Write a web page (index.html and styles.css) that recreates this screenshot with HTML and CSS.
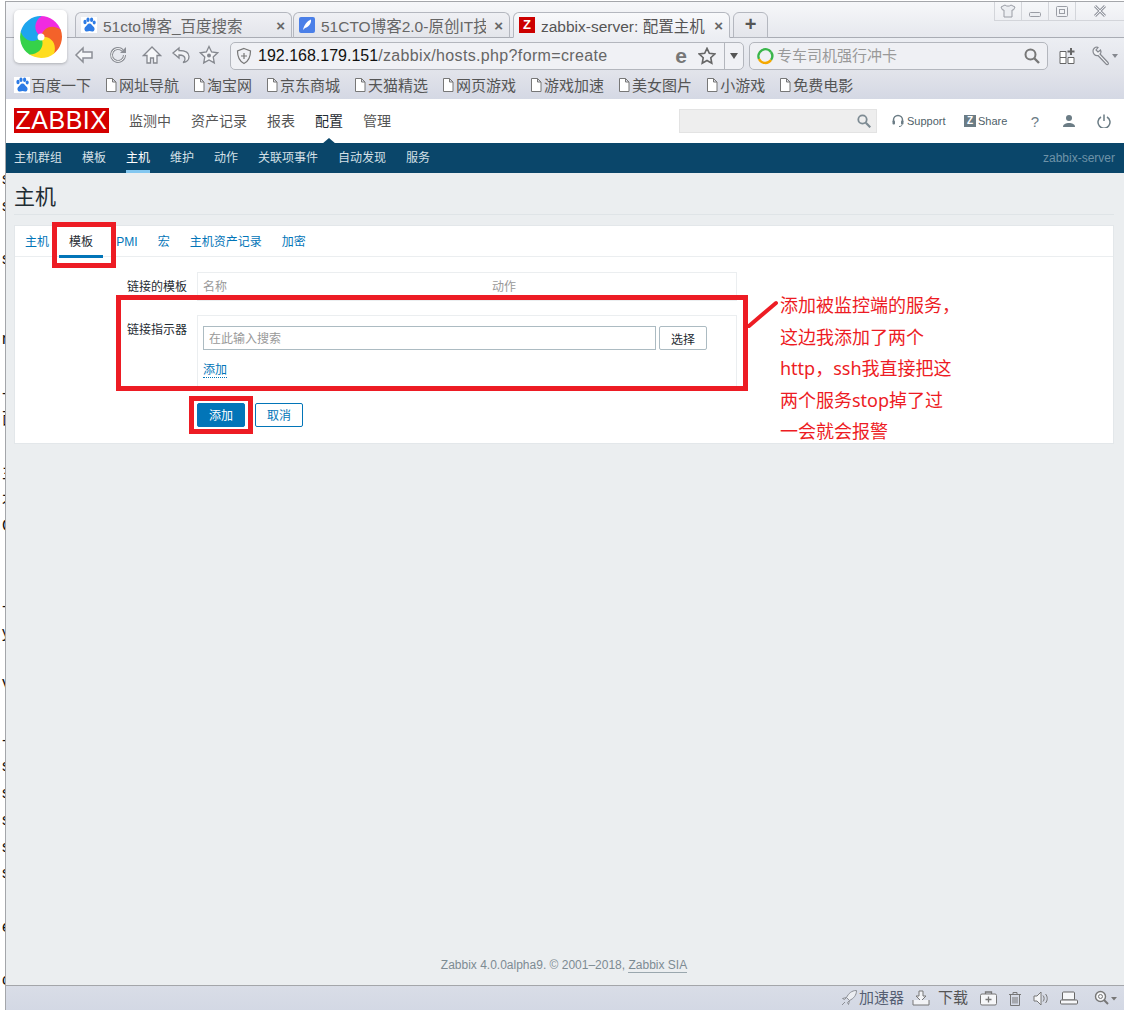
FILE: index.html
```html
<!doctype html>
<html lang="zh-CN">

<head>
    <title>zabbix-server: 配置主机</title>
    <link rel="stylesheet" href="styles.css">
</head>

<body>
    <!-- shared icons -->
    <svg class="defs" width="0" height="0">
        <symbol id="paw" viewBox="0 0 16 16">
            <rect width="16" height="16" fill="#fff" />
            <ellipse cx="4" cy="5" rx="1.6" ry="2.2" fill="#2d7be5" />
            <ellipse cx="7" cy="2.8" rx="1.6" ry="2.2" fill="#2d7be5" />
            <ellipse cx="10.6" cy="2.8" rx="1.6" ry="2.2" fill="#2d7be5" />
            <ellipse cx="13.2" cy="5.6" rx="1.5" ry="2" fill="#2d7be5" />
            <path d="M8.5 6.5c-2 0-2.6 2.2-4 3.2-1.600 1.100-1.500 4.800 1.500 4.800 1 0 1.700-.4 2.600-.4s1.600.4 2.500.4c3 0 3-3.700 1.400-4.800-1.400-1-2-3.200-4-3.200z" fill="#2d7be5" />
        </symbol>
        <symbol id="doc" viewBox="0 0 12 14">
            <path d="M1.500.5h6l3.500 3.500v9.500h-9.500z M7.500.5v3.500h3.500" fill="#fff" stroke="#777" />
        </symbol>
    </svg>

    <aside class="behind">s
s

s


n

-
面

主
木
C


-
y

V

-
s
s
s
s
s

e

c</aside>

    <div class="window">
        <div class="tabstrip">
            <div class="tab">
                <svg class="fav" width="16" height="16"><use href="#paw" /></svg>
                <span class="tab-title">51cto博客_百度搜索</span>
                <span class="tab-x">×</span>
            </div>
            <div class="tab">
                <svg class="fav" width="16" height="16" viewBox="0 0 16 16">
                    <rect width="16" height="16" rx="2" fill="#4a7fe8" />
                    <path d="M4 13C5 8 8 4 12 2.500 12.500 6 10 10 6 11z" fill="#fff" />
                </svg>
                <span class="tab-title">51CTO博客2.0-原创IT技</span>
                <span class="tab-x">×</span>
            </div>
            <div class="tab tab-active">
                <span class="fav-z">Z</span>
                <span class="tab-title">zabbix-server: 配置主机</span>
                <span class="tab-x">×</span>
            </div>
            <div class="tab-new">+</div>
            <div class="winctl">
                <span class="winbtn">
                    <svg width="16" height="14" viewBox="0 0 16 14">
                        <path d="M5 1 1 3l1.500 3H4v7h8V6h1.500L15 3l-4-2c-1 1.500-5 1.500-6 0z" fill="#eceef2" stroke="#9a9da5" />
                    </svg>
                </span>
                <span class="winbtn">
                    <svg width="14" height="14" viewBox="0 0 14 14"><rect x="1.500" y="8.500" width="11" height="4" rx="1" fill="#eceef2" stroke="#9a9da5" /></svg>
                </span>
                <span class="winbtn">
                    <svg width="14" height="14" viewBox="0 0 14 14">
                        <rect x="1.500" y="2.500" width="11" height="10" rx="1" fill="none" stroke="#9a9da5" />
                        <rect x="4.500" y="5.500" width="5" height="4" fill="none" stroke="#9a9da5" />
                    </svg>
                </span>
                <span class="winbtn winbtn-close">
                    <svg width="14" height="14" viewBox="0 0 14 14"><path d="M2 2l10 10M12 2 2 12" stroke="#9a9da5" stroke-width="3" /><path d="M2 2l10 10M12 2 2 12" stroke="#eceef2" /></svg>
                </span>
            </div>
        </div>

        <div class="toolbar">
            <div class="navicons">
                <svg width="20" height="20" viewBox="0 0 20 20"><path d="M9 3 2 10l7 7v-4h9V7H9z" fill="#f6f7f9" stroke="#8c8f96" stroke-width="1.500" /></svg>
                <svg width="20" height="20" viewBox="0 0 20 20"><path d="M16.500 10a6.500 6.500 0 1 1-2-4.700" fill="none" stroke="#8c8f96" stroke-width="3" /><path d="M16.500 10a6.500 6.500 0 1 1-2-4.700" fill="none" stroke="#f6f7f9" /><path d="M18 2v6h-6z" fill="#8c8f96" /></svg>
                <svg width="20" height="20" viewBox="0 0 20 20"><path d="M10 2 1.500 10.500H5V18h3.500v-5h3v5H15v-7.500h3.500z" fill="#f6f7f9" stroke="#85888f" stroke-width="1.300" /></svg>
                <svg class="nav-undo" width="20" height="20" viewBox="0 0 20 20"><path d="M8 3 2 8l6 5v-3c4 0 6 1.500 6 4 0 1.500-1 3-2 3.500 4-.5 6-3 6-6 0-4-4-6-10-6z" fill="#f2f3f6" stroke="#85888f" stroke-width="1.300" /></svg>
                <svg class="nav-star" width="20" height="20" viewBox="0 0 20 20"><path d="m10 1.500 2.600 5.500 6 .8-4.400 4.100 1.100 6L10 15l-5.300 2.900 1.100-6L1.400 7.800l6-.8z" fill="#f2f3f6" stroke="#85888f" stroke-width="1.300" /><circle cx="10" cy="10.500" r="2" fill="#85888f" /></svg>
            </div>
            <div class="addressbar">
                <svg class="shield" width="16" height="18" viewBox="0 0 16 18"><path d="M8 1.500 14.500 4c0 6-1.500 10-6.500 12.500C3 14 1.500 10 1.500 4z" fill="none" stroke="#777" stroke-width="1.200" /><path d="M8 6v6M5 9h6" stroke="#777" stroke-width="1.200" /></svg>
                <span class="url"><b>192.168.179.151</b>/zabbix/hosts.php?form=create</span>
                <span class="ie-e">e</span>
                <svg class="addr-star" width="18" height="18" viewBox="0 0 20 20"><path d="m10 1.500 2.600 5.500 6 .8-4.400 4.100 1.100 6L10 15l-5.300 2.900 1.100-6L1.400 7.800l6-.8z" fill="none" stroke="#666" stroke-width="1.800" /></svg>
                <span class="addr-drop"></span>
            </div>
            <div class="searchbar">
                <svg width="18" height="18" viewBox="0 0 18 18">
                    <path d="M3 12a7 7 0 0 1 12-7" fill="none" stroke="#39b54a" stroke-width="2.400" />
                    <path d="M15 5a7 7 0 0 1 0 8" fill="none" stroke="#39b54a" stroke-width="2.400" />
                    <path d="M15 13a7 7 0 0 1-12-1" fill="none" stroke="#f5a800" stroke-width="2.400" />
                </svg>
                <span class="search-hint">专车司机强行冲卡</span>
                <svg width="16" height="16" viewBox="0 0 16 16"><circle cx="6.500" cy="6.500" r="5" fill="none" stroke="#777" stroke-width="2" /><path d="m10 10 5 5" stroke="#777" stroke-width="2.400" /></svg>
            </div>
            <svg class="tool-apps" width="16" height="18" viewBox="0 0 16 18">
                <path d="M1 4.500h6v6H1zM1 10.500h6v6H1zM9 10.500h6v6H9z" fill="#fff" stroke="#666" />
                <path d="M12 1v7M8.500 4.500h7" stroke="#666" stroke-width="2" />
            </svg>
            <svg class="tool-wrench" width="28" height="20" viewBox="0 0 28 20">
                <path d="M1 5c0-2 2-4 4-4l1 .5L4 4l2 2 2.500-2 .5 1.500c0 1-.3 2-1 2.500l8 8.500c1 1 0 2.500-1.500 2L6 9.500C3 10 1 8 1 5z" fill="#f2f3f6" stroke="#85888f" stroke-width="1.200" />
                <path d="m20 8 6 0-3 4z" fill="#85888f" />
            </svg>
        </div>

        <div class="bookmarks">
            <a class="mark"><svg width="16" height="16"><use href="#paw" /></svg>百度一下</a>
            <a class="mark"><svg width="12" height="14"><use href="#doc" /></svg>网址导航</a>
            <a class="mark"><svg width="12" height="14"><use href="#doc" /></svg>淘宝网</a>
            <a class="mark"><svg width="12" height="14"><use href="#doc" /></svg>京东商城</a>
            <a class="mark"><svg width="12" height="14"><use href="#doc" /></svg>天猫精选</a>
            <a class="mark"><svg width="12" height="14"><use href="#doc" /></svg>网页游戏</a>
            <a class="mark"><svg width="12" height="14"><use href="#doc" /></svg>游戏加速</a>
            <a class="mark"><svg width="12" height="14"><use href="#doc" /></svg>美女图片</a>
            <a class="mark"><svg width="12" height="14"><use href="#doc" /></svg>小游戏</a>
            <a class="mark"><svg width="12" height="14"><use href="#doc" /></svg>免费电影</a>
        </div>

        <header class="topbar">
            <div class="logo">ZABBIX</div>
            <nav class="mainnav">
                <a>监测中</a>
                <a>资产记录</a>
                <a>报表</a>
                <a class="current">配置</a>
                <a>管理</a>
            </nav>
            <div class="usernav">
                <div class="topsearch">
                    <svg width="14" height="14" viewBox="0 0 14 14"><circle cx="5.500" cy="5.500" r="4.200" fill="none" stroke="#7d8b93" stroke-width="1.800" /><path d="m8.800 8.800 4.500 4.500" stroke="#7d8b93" stroke-width="2.200" /></svg>
                </div>
                <a class="ulink ulink-support">
                    <svg width="12" height="14" viewBox="0 0 12 14"><path d="M1.500 8V6a4.500 4.500 0 0 1 9 0v2" fill="none" stroke="#6b7c85" stroke-width="1.500" /><rect x=".5" y="6.500" width="2.500" height="4" rx="1" fill="#6b7c85" /><rect x="9" y="6.500" width="2.500" height="4" rx="1" fill="#6b7c85" /><path d="M10 10.500c0 1.500-1.500 2-3 2" fill="none" stroke="#6b7c85" /></svg>
                    Support
                </a>
                <a class="ulink ulink-share"><span class="zbox">Z</span>Share</a>
                <a class="uicon uicon-help">?</a>
                <svg class="uicon-user" width="14" height="14" viewBox="0 0 14 14"><circle cx="7" cy="4" r="3" fill="#6b7c85" /><path d="M1 13c0-3 3-4 6-4s6 1 6 4z" fill="#6b7c85" /></svg>
                <svg class="uicon-power" width="14" height="14" viewBox="0 0 14 14"><path d="M4 3a6 6 0 1 0 6 0" fill="none" stroke="#6b7c85" stroke-width="1.500" /><path d="M7 .5v6.500" stroke="#6b7c85" stroke-width="1.500" /></svg>
            </div>
        </header>

        <nav class="subnav">
            <a>主机群组</a>
            <a>模板</a>
            <a class="current">主机</a>
            <a>维护</a>
            <a>动作</a>
            <a>关联项事件</a>
            <a>自动发现</a>
            <a>服务</a>
            <span class="server">zabbix-server</span>
        </nav>

        <main class="content">
            <h1 class="page-title">主机</h1>
            <section class="card">
                <ul class="tabs">
                    <li>主机</li>
                    <li class="active">模板</li>
                    <li>IPMI</li>
                    <li>宏</li>
                    <li>主机资产记录</li>
                    <li>加密</li>
                </ul>
                <form class="hostform">
                    <label class="field-label">链接的模板</label>
                    <div class="box box-linked">
                        <span class="col-head col-name">名称</span>
                        <span class="col-head">动作</span>
                    </div>
                    <label class="field-label">链接指示器</label>
                    <div class="box box-link">
                        <div class="input-row">
                            <input type="text" class="search-input" placeholder="在此输入搜索">
                            <button type="button" class="btn-select">选择</button>
                        </div>
                        <a class="add-link">添加</a>
                    </div>
                    <div class="form-actions">
                        <button type="button" class="btn-add">添加</button>
                        <button type="button" class="btn-cancel">取消</button>
                    </div>
                </form>
            </section>
            <footer class="pagefoot">Zabbix 4.0.0alpha9. © 2001–2018, <a>Zabbix SIA</a></footer>
        </main>

        <div class="statusbar">
            <svg width="18" height="18" viewBox="0 0 18 18"><path d="M16.500 1.500c-5 0-8 3-10 7l3 3c4-2 7-5 7-10zM6.500 8.500l-4 1 2 1zM9.500 11.500l-1 4-1-2zM5 13l-3 3" fill="#eceef2" stroke="#8c8f96" /></svg>
            <span class="st-text">加速器</span>
            <svg class="st-dl" width="18" height="16" viewBox="0 0 18 16"><path d="M7 1h4v5h3l-5 5-5-5h3z" fill="#f2f3f6" stroke="#777" /><path d="M1 10v5h16v-5" fill="#f2f3f6" stroke="#777" /></svg>
            <span class="st-text st-text-dl">下载</span>
            <svg class="st-gap" width="17" height="15" viewBox="0 0 17 15"><rect x=".5" y="3" width="16" height="11" rx="1.500" fill="#f6f7f9" stroke="#777" /><path d="M5.500 3V1h6v2M8.500 5.500v6M5.500 8.500h6" fill="none" stroke="#777" stroke-width="1.300" /></svg>
            <svg class="st-gap" width="14" height="15" viewBox="0 0 14 15"><path d="M1 3.500h12M5 3.500V1.500h4v2M2.500 3.500v11h9v-11M5 6v6.500M7 6v6.500M9 6v6.500" fill="none" stroke="#777" /></svg>
            <svg class="st-gap" width="16" height="15" viewBox="0 0 16 15"><path d="M1 5h3l4-4v13l-4-4H1z" fill="#f6f7f9" stroke="#777" /><path d="M10 4.500c1.500 1.500 1.500 4.500 0 6M12.500 3c2.300 2.500 2.300 6.500 0 9" fill="none" stroke="#777" /></svg>
            <svg class="st-gap" width="18" height="14" viewBox="0 0 18 14"><rect x="2.500" y="1" width="12" height="8" rx="1" fill="#f6f7f9" stroke="#666" /><rect x=".5" y="9" width="17" height="4" rx="1" fill="#f6f7f9" stroke="#666" /></svg>
            <svg class="st-zoom" width="24" height="16" viewBox="0 0 24 16"><circle cx="6.500" cy="6.500" r="5" fill="#f6f7f9" stroke="#777" stroke-width="1.400" /><circle cx="6.500" cy="6.500" r="2" fill="none" stroke="#777" /><path d="m10 10 4 4" stroke="#777" stroke-width="2" /><path d="m17 7 6 0-3 3.500z" fill="#777" /></svg>
        </div>
    </div>

    <!-- browser logo sits over the tab strip -->
    <div class="app-logo">
        <svg width="44" height="44" viewBox="-22 -22 44 44">
            <circle r="20" fill="#ff9a1f" />
            <path d="M0 0C-8-4-10-14-1-21A21 21 0 0 1 20-6C12-12 3-9 0 0Z" fill="#f02be0" />
            <path d="M0 0C-8-4-10-14-1-21A21 21 0 0 1 20-6C12-12 3-9 0 0Z" fill="#f4622a" transform="rotate(72)" />
            <path d="M0 0C-8-4-10-14-1-21A21 21 0 0 1 20-6C12-12 3-9 0 0Z" fill="#ffdd1f" transform="rotate(144)" />
            <path d="M0 0C-8-4-10-14-1-21A21 21 0 0 1 20-6C12-12 3-9 0 0Z" fill="#35d24a" transform="rotate(216)" />
            <path d="M0 0C-8-4-10-14-1-21A21 21 0 0 1 20-6C12-12 3-9 0 0Z" fill="#1ea5ee" transform="rotate(288)" />
            <circle r="3.500" fill="#fff" />
        </svg>
    </div>

    <!-- hand drawn notes on top of the screenshot -->
    <div class="mark-box mark-tab"></div>
    <div class="mark-box mark-field"></div>
    <div class="mark-box mark-btn"></div>
    <svg class="mark-line" width="32" height="28" viewBox="0 0 32 28"><path d="M2 26 29 3" stroke="#ed1c24" stroke-width="4" stroke-linecap="round" /></svg>
    <div class="note">添加被监控端的服务，<br>这边我添加了两个<br>http，ssh我直接把这<br>两个服务stop掉了过<br>一会就会报警</div>
</body>

</html>
```

FILE: styles.css
```css
* {
    box-sizing: border-box;
}

html,
body {
    margin: 0;
    height: 1010px;
    overflow: hidden;
}

body {
    display: flex;
    position: relative;
    background-color: white;
    font-family: "Liberation Sans", "Noto Sans CJK SC", sans-serif;
    font-size: 12px;
}

.defs {
    position: absolute;
}

/* page behind the browser window */
.behind {
    width: 5px;
    flex: none;
    padding: 166px 0 0 2px;
    overflow: hidden;
    white-space: pre;
    font-size: 16px;
    line-height: 26.7px;
    color: #111;
}

.window {
    flex: 1;
    min-width: 0;
    margin-top: 1px;
    display: flex;
    flex-direction: column;
    border-left: 1px solid #a4a6aa;
    border-top: 1px solid #a4a6aa;
    background-color: #ebeef0;
}

/* tabs */
.tabstrip {
    height: 36px;
    flex: none;
    display: flex;
    align-items: flex-end;
    padding-left: 69px;
    gap: 1px;
    background: linear-gradient(#f6f7f9, #e6e8ee);
    border-bottom: 1px solid #a9acb4;
}

.tab {
    width: 217px;
    height: 26px;
    margin-bottom: -1px;
    display: flex;
    align-items: center;
    padding: 0 6px 0 5px;
    border: 1px solid #b4b7bf;
    border-bottom-color: #a9acb4;
    border-radius: 6px 6px 0 0;
    background: linear-gradient(#eff0f4, #e3e5eb);
    color: #666;
    font-size: 15.5px;
    white-space: nowrap;
}

.tab-active {
    margin-left: 2px;
    background: linear-gradient(#f8f9fb, #eceef3);
    border-bottom-color: #eceef3;
    color: #555;
}

.fav {
    flex: none;
}

.fav-z {
    width: 16px;
    height: 16px;
    flex: none;
    background-color: #cc0000;
    color: white;
    font-size: 13px;
    font-weight: bold;
    line-height: 16px;
    text-align: center;
}

.tab-title {
    flex: 1;
    min-width: 0;
    margin-left: 6px;
    overflow: hidden;
}

.tab-x {
    flex: none;
    margin-left: 8px;
    font-size: 15px;
    font-weight: bold;
    color: #666;
}

.tab-new {
    width: 35px;
    height: 26px;
    margin-left: 2px;
    margin-bottom: -1px;
    border: 1px solid #b4b7bf;
    border-radius: 6px 6px 0 0;
    background: linear-gradient(#eff0f4, #e3e5eb);
    color: #555;
    font-size: 20px;
    font-weight: bold;
    line-height: 23px;
    text-align: center;
}

.winctl {
    margin-left: auto;
    align-self: flex-start;
    display: flex;
    height: 19px;
}

.winbtn {
    width: 27px;
    display: flex;
    align-items: center;
    justify-content: center;
    border-left: 1px solid #d3d5da;
    border-bottom: 1px solid #d3d5da;
}

.winbtn-close {
    width: 49px;
}

/* address row */
.toolbar {
    height: 35px;
    flex: none;
    display: flex;
    align-items: center;
    background: linear-gradient(#eceef3, #e1e3ea);
}

.navicons {
    width: 224px;
    margin-top: -2px;
    padding-left: 68px;
    display: flex;
    gap: 14px;
}

.nav-undo {
    margin-left: -5px;
}

.nav-star {
    margin-left: -6px;
}

.addressbar {
    width: 514px;
    height: 28px;
    display: flex;
    align-items: center;
    padding-left: 5px;
    border: 1px solid #b3b6bd;
    border-radius: 5px;
    background-color: #f0f1f5;
}

.shield {
    flex: none;
}

.url {
    margin-left: 6px;
    font-size: 16px;
    letter-spacing: .35px;
    color: #666;
    white-space: nowrap;
}

.url b {
    font-weight: normal;
    letter-spacing: 0;
    color: #111;
}

.ie-e {
    margin-left: auto;
    font-size: 21px;
    line-height: 20px;
    font-weight: bold;
    color: #777;
}

.addr-star {
    margin-left: 11px;
}

.addr-drop {
    width: 19px;
    height: 100%;
    margin-left: 8px;
    position: relative;
    border-left: 1px solid #b3b6bd;
}

.addr-drop::after {
    content: "";
    position: absolute;
    left: 5px;
    top: 10px;
    border: 4.500px solid transparent;
    border-top: 6px solid #555;
}

.searchbar {
    width: 299px;
    height: 28px;
    margin-left: 5px;
    display: flex;
    align-items: center;
    padding: 0 7px 0 6px;
    border: 1px solid #b3b6bd;
    border-radius: 5px;
    background-color: #eff0f4;
}

.search-hint {
    flex: 1;
    margin: -3px 0 0 3px;
    font-size: 15px;
    color: #999;
}

.tool-apps {
    margin-left: 11px;
}

.tool-wrench {
    margin-left: 17px;
}

/* bookmarks */
.bookmarks {
    height: 26px;
    flex: none;
    display: flex;
    align-items: center;
    gap: 14px;
    padding: 0 0 3px 8px;
    background: linear-gradient(#e1e3ea, #d4d8e4);
    font-size: 15px;
    color: #555;
}

.mark {
    display: flex;
    align-items: center;
    gap: 2px;
    white-space: nowrap;
}

.mark:first-child {
    gap: 1px;
}

/* zabbix header */
.topbar {
    height: 44px;
    flex: none;
    display: flex;
    align-items: center;
    padding-left: 8px;
    background-color: white;
}

.logo {
    width: 95px;
    height: 25px;
    margin-top: -1px;
    background-color: #d40000;
    color: white;
    font-size: 25px;
    line-height: 25px;
    letter-spacing: .5px;
    text-align: center;
}

.mainnav {
    margin-left: 20px;
    padding-bottom: 2px;
    display: flex;
    gap: 20px;
    font-size: 14px;
    color: #555;
}

.mainnav .current {
    position: relative;
    color: #1f2c33;
}

.mainnav .current::after {
    content: "";
    position: absolute;
    left: 7px;
    top: 28px;
    border: 7px solid transparent;
    border-top: 0;
    border-bottom: 6px solid #0a466a;
}

.usernav {
    margin-left: auto;
    display: flex;
    align-items: center;
    padding-right: 13px;
    color: #4f5f69;
}

.topsearch {
    width: 198px;
    height: 24px;
    margin-right: 15px;
    display: flex;
    align-items: center;
    justify-content: flex-end;
    padding-right: 5px;
    background-color: #eeeeee;
    border: 1px solid #e3e3e3;
}

.ulink {
    display: flex;
    align-items: center;
    font-size: 11px;
    color: #4f5f69;
}

.ulink svg {
    margin-right: 3px;
}

.ulink-support {
    width: 72px;
}

.ulink-share {
    width: 61px;
}

.zbox {
    width: 12px;
    height: 12px;
    margin-right: 2px;
    background-color: #6b7c85;
    color: white;
    font-size: 10px;
    font-weight: bold;
    line-height: 12px;
    text-align: center;
}

.uicon-help {
    width: 20px;
    margin-right: 17px;
    font-size: 15px;
    color: #6b7c85;
    text-align: center;
}

.uicon-power {
    margin-left: 21px;
}

.subnav {
    height: 30px;
    flex: none;
    display: flex;
    align-items: center;
    gap: 20px;
    padding: 0 9px 0 8px;
    background-color: #0a466a;
    color: #d5e0e7;
}

.subnav a {
    height: 30px;
    line-height: 30px;
}

.subnav .current {
    color: white;
    border-bottom: 3px solid #83c7f0;
}

.server {
    margin-left: auto;
    color: #6e93a8;
}

/* page */
.content {
    flex: 1;
    display: flex;
    flex-direction: column;
    padding: 0 10px 0 8px;
    min-height: 0;
}

.page-title {
    height: 42px;
    margin: 0 0 10px;
    padding-top: 10px;
    border-bottom: 1px solid #dfe4e7;
    font-size: 21px;
    font-weight: normal;
    line-height: 28px;
    color: #1f2c33;
}

.card {
    background-color: white;
    border: 1px solid #e3e7ea;
}

.tabs {
    height: 31px;
    margin: 0;
    padding: 0;
    display: flex;
    list-style: none;
    border-bottom: 1px solid #ebeef0;
    color: #0275b8;
    line-height: 33px;
}

.tabs li {
    padding: 0 10px;
}

.tabs .active {
    height: 32px;
    border-bottom: 3px solid #0275b8;
    color: #1f2c33;
}

.hostform {
    display: grid;
    grid-template-columns: 172px 540px;
    column-gap: 10px;
    row-gap: 14px;
    padding: 15px 0 16px;
}

.field-label {
    padding-top: 5px;
    text-align: right;
    color: #1f2c33;
}

.box {
    border: 1px solid #ebeef0;
}

.box-linked {
    height: 29px;
    display: flex;
    padding: 4px 5px;
    color: #999;
}

.col-name {
    width: 289px;
}

.box-link {
    height: 72px;
    padding: 10px 5px;
}

.input-row {
    display: flex;
    gap: 3px;
    margin-bottom: 10px;
}

.search-input {
    width: 453px;
    height: 24px;
    padding: 1px 5px 0;
    border: 1px solid #acbbc2;
    font: inherit;
    color: #1f2c33;
}

.search-input::placeholder {
    color: #999;
    opacity: 1;
}

.btn-select {
    width: 48px;
    height: 24px;
    padding: 0;
    background-color: white;
    border: 1px solid #acbbc2;
    border-radius: 2px;
    font: inherit;
    color: #1f2c33;
}

.add-link {
    color: #0275b8;
    border-bottom: 1px dotted #0275b8;
}

.form-actions {
    grid-column: 2;
    display: flex;
    gap: 10px;
    margin-top: 2px;
}

.form-actions button {
    width: 48px;
    height: 24px;
    padding: 0 0 2px;
    border: 1px solid #0275b8;
    border-radius: 2px;
    font: inherit;
}

.btn-add {
    background-color: #0275b8;
    color: white;
}

.btn-cancel {
    background-color: white;
    color: #0275b8;
}

.pagefoot {
    margin-top: auto;
    padding: 0 0 12px;
    text-align: center;
    color: #7d8b93;
    line-height: 16px;
}

.pagefoot a {
    border-bottom: 1px solid #9aa7ae;
}

.statusbar {
    height: 25px;
    flex: none;
    display: flex;
    align-items: center;
    justify-content: flex-end;
    padding-right: 6px;
    background: linear-gradient(#d9dde7, #d3d8e4);
    border-top: 1px solid #a4a6aa;
}

.st-text {
    margin: -3px 0 0 1px;
    font-size: 15px;
    color: #555f73;
}

.st-text-dl {
    margin-left: 8px;
    margin-right: 1px;
    color: #555;
}

.st-dl {
    margin-left: 8px;
}

.st-gap {
    margin-left: 11px;
}

.st-zoom {
    margin-left: 16px;
}

/* things lying over the page */
.app-logo {
    position: absolute;
    left: 14px;
    top: 10px;
    width: 53px;
    height: 53px;
    display: flex;
    align-items: center;
    justify-content: center;
    background-color: white;
    border-radius: 5px;
    box-shadow: 0 1px 3px rgba(0, 0, 0, 0.25);
}

.mark-box {
    position: absolute;
    border: 5px solid #ed1c24;
}

.mark-tab {
    left: 52px;
    top: 222px;
    width: 64px;
    height: 46px;
}

.mark-field {
    left: 116px;
    top: 295px;
    width: 632px;
    height: 96px;
}

.mark-btn {
    left: 189px;
    top: 396px;
    width: 64px;
    height: 38px;
}

.mark-line {
    position: absolute;
    left: 747px;
    top: 300px;
}

.note {
    position: absolute;
    left: 780px;
    top: 290px;
    font-family: "Noto Sans", "Noto Sans CJK SC", sans-serif;
    font-size: 18px;
    line-height: 31.500px;
    color: #ed1c24;
    white-space: nowrap;
}
```
